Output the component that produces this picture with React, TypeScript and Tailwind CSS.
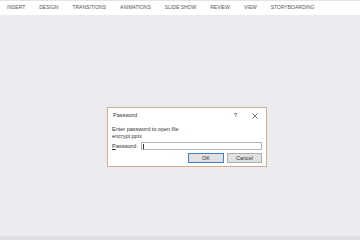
import * as React from "react"

const tabs = ["INSERT", "DESIGN", "TRANSITIONS", "ANIMATIONS", "SLIDE SHOW", "REVIEW", "VIEW", "STORYBOARDING"]

export default function App() {
  return (
    <div
      className="w-[360px] h-[240px] flex flex-col bg-[#e9ebee] overflow-hidden"
      style={{ fontFamily: '"Liberation Sans", Arial, sans-serif' }}
    >
      {/* Ribbon tabs */}
      <div className="h-[15px] shrink-0 bg-white border-t border-[#e4e4e4] flex items-center gap-[14px] pl-[7px] text-[5px] text-[#555]">
        {tabs.map((t) => (
          <span key={t}>{t}</span>
        ))}
      </div>

      {/* Slide area */}
      <div className="flex-1 flex items-start justify-center pt-[92px] pl-[14px]">
        <div className="w-[160px] h-[60px] bg-white border border-[#d8ab8a] flex flex-col text-[#333]">
          {/* Title */}
          <div className="h-[15px] flex items-center pl-[5px] pr-[8px] text-[5.5px]">
            <span className="flex-1">Password</span>
            <span className="mr-[15px] text-[6px]">?</span>
            <svg width="6" height="6" viewBox="0 0 6 6">
              <path d="M0.5 0.5 L5.5 5.5 M5.5 0.5 L0.5 5.5" stroke="#444" strokeWidth="0.7" />
            </svg>
          </div>
          {/* Body */}
          <div className="flex flex-col px-[4px] pt-[3px] text-[5.5px] leading-[7px]">
            <div>Enter password to open file</div>
            <div>encrypt.pptx</div>
            <div className="flex items-center mt-[2px]">
              <span className="w-[29px]">
                <span className="underline">P</span>assword:
              </span>
              <div className="flex-1 h-[8px] border border-[#b5b5b5] flex items-center pl-[1px]">
                <div className="w-px h-[5px] bg-[#333]" />
              </div>
            </div>
            <div className="flex justify-end gap-[3px] mt-[3px]">
              <div className="w-[36px] h-[10px] bg-[#e1e1e1] border border-[#3d7fd5] flex items-center justify-center">OK</div>
              <div className="w-[35px] h-[10px] bg-[#e1e1e1] border border-[#adadad] flex items-center justify-center">Cancel</div>
            </div>
          </div>
        </div>
      </div>

      {/* Bottom status edge */}
      <div className="h-[4px] shrink-0 bg-[#dedfe2]" />
    </div>
  )
}
